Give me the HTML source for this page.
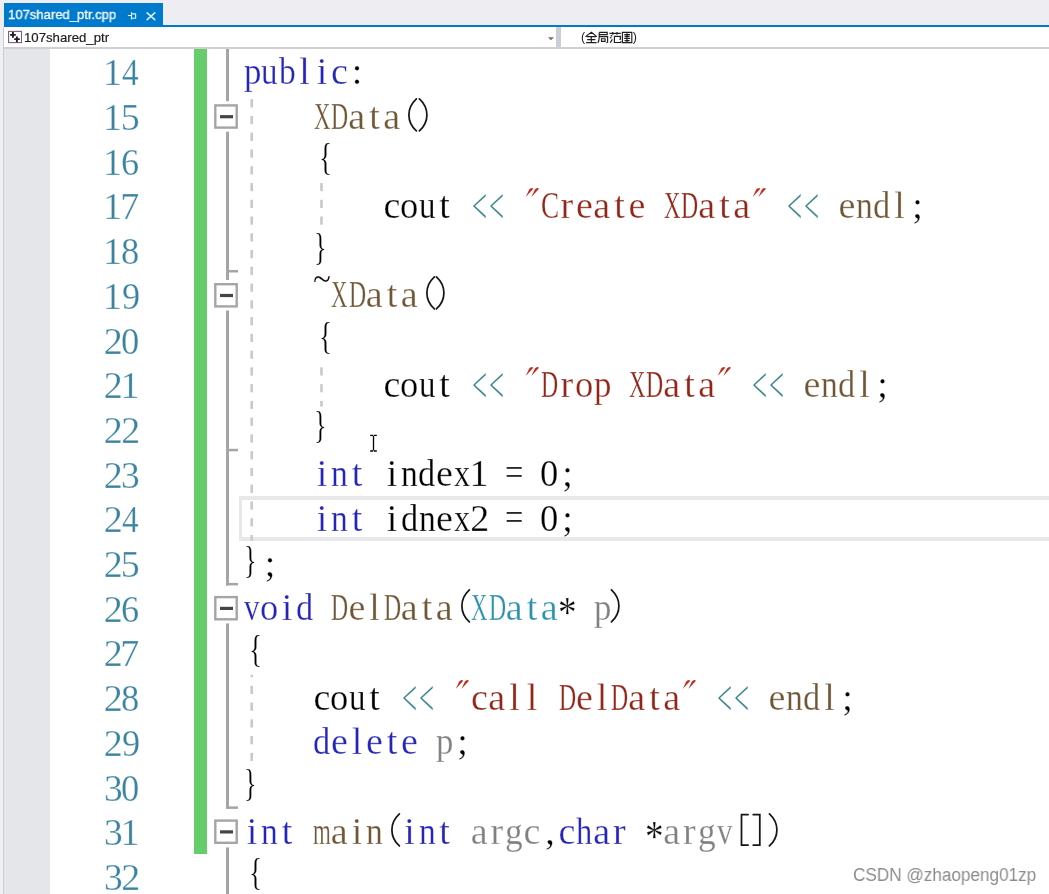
<!DOCTYPE html>
<html><head><meta charset="utf-8"><style>
*{margin:0;padding:0;box-sizing:border-box}
html,body{width:1049px;height:894px;overflow:hidden;background:#fff;position:relative}
body{font-family:"Liberation Sans",sans-serif}
#tabstrip{position:absolute;left:0;top:0;width:1049px;height:27px;background:#eeeef2}
#tab{position:absolute;left:4px;top:3px;width:158.5px;height:22px;background:#007acc;color:#fff;font-size:13.4px}
#tab .t{will-change:transform;position:absolute;left:4.3px;top:3.5px;letter-spacing:0;-webkit-text-stroke:0.35px #e8f6ff;transform:scaleX(0.975);transform-origin:0 0;white-space:pre}
#bluebar{position:absolute;left:4px;top:24.5px;width:1049px;height:2.3px;background:#007acc}
#nav{position:absolute;left:0;top:27px;width:1049px;height:21px;background:#fff}
#navtxt{position:absolute;left:24.2px;top:29.5px;font-size:13.2px;color:#1e1e1e;white-space:pre;will-change:transform;-webkit-text-stroke:0.2px #1e1e1e}
#navsep{position:absolute;left:556.3px;top:27px;width:4.5px;height:20.5px;background:#ccced6}
#scope{position:absolute;left:581.3px;top:30px;font-size:12.5px;color:#1e1e1e;white-space:pre;will-change:transform}
#navline{position:absolute;left:0;top:47.3px;width:1049px;height:1.8px;background:#cfcfd4}
#leftedge{position:absolute;left:0;top:27px;width:3.6px;height:867px;background:#f0f0f4}
#leftline{position:absolute;left:3.3px;top:27px;width:1.2px;height:867px;background:#caccd2}
#gutter{position:absolute;left:4.4px;top:49px;width:45.2px;height:845px;background:#e5e6e9}
#green{position:absolute;left:193.8px;top:49px;width:13.3px;height:804.6px;background:#67cd6b}
#curline{position:absolute;left:239.2px;top:496.4px;width:820px;height:45px;border:4px solid #e8e8eb;border-left-width:3.5px;border-right:none}
.ln{position:absolute;left:0;top:0;width:1049px;height:44.7px;will-change:transform;font-family:"Liberation Serif",serif;font-size:38px;line-height:44.7px;color:#000}
.ln s{position:absolute;top:0;text-decoration:none;-webkit-text-stroke:0.6px rgba(255,255,255,0.5);transform-origin:0 35.17px;white-space:pre}
.num s{color:#3a83a0}
#wm{will-change:transform;position:absolute;left:852.5px;top:865px;font-size:18px;transform:scaleX(0.953);transform-origin:0 0;white-space:pre;color:#8c8c8c;letter-spacing:0;text-shadow:0 0 1px #fff}
</style></head><body>
<div id="tabstrip"></div>
<div id="bluebar"></div>
<div id="tab"><span class="t">107shared_ptr.cpp</span>
</div>
<svg style="position:absolute;left:0;top:0" width="170" height="26" viewBox="0 0 170 26" fill="none" stroke="#d8f3ff">
<path d="M127.9 15.5H131.4M131.5 12.1V19.5M131.5 13.8H135.6V18.2H131.5" stroke-width="1.15"/>
<path d="M146.6 12.4L155.3 20.1M155.3 12.4L146.6 20.1" stroke-width="1.45"/>
</svg>
<div id="nav"></div>
<svg style="position:absolute;left:0;top:27px" width="30" height="21" viewBox="0 27 30 21">
<rect x="8.6" y="31.4" width="12.9" height="11.2" fill="#fff" stroke="#7d5d7d" stroke-width="1.1"/>
<path d="M10.1 34.9H15.8M12.9 31.9V37.8M14.2 39.1H19.8M16.9 36.4V42.3" stroke="#1e1e1e" stroke-width="1.9"/>
</svg>
<div id="navtxt">107shared_ptr</div>
<svg style="position:absolute;left:547px;top:36px" width="8" height="5"><path d="M1 1.2H7L4 4.3Z" fill="#717171"/></svg>
<div id="navsep"></div>
<div id="scope">(<span style="display:inline-block;width:47.5px"></span>)</div>
<svg style="position:absolute;left:580px;top:29px" width="60" height="18" viewBox="580 29 60 18" fill="none" stroke="#1e1e1e" stroke-width="1.15">
<path d="M585.5 36.6L591.4 32.2L596.8 36.6M586.6 36.6H596M587.2 39.6H595.4M586.1 42.6H596.6M591.3 36.6V42.6"/>
<path d="M599.2 32.4H607.2V34.6H599.4M599.2 32.4V37C599.2 40 598.8 41.5 597.8 43M599.6 36.6H607.6V42.2L606.4 42.8M601.5 38.7H605.1V41.3H601.5Z"/>
<path d="M609.4 33.4H620.8M612.7 32V34.8M617 32V34.8M610.8 35.2L612.2 36.2M610 37.3L611.4 38.2M610.2 42.6L612.4 39.4M614 36.4H620.4V39.2L619.4 39.4M614.4 36.4V42.5H620.8V41.2"/>
<path d="M622.4 32.4H631.8V42.6H622.4ZM624.3 34.6H630M624.6 36.4H629.6M624.2 38.4H630M627 33.2V42M624.6 40.6H629.6"/>
</svg>
<div id="navline"></div>
<div id="leftedge"></div><div id="leftline"></div>
<div id="gutter"></div>
<div id="green"></div>
<div id="curline"></div>
<svg style="position:absolute;left:0;top:0" width="1049" height="894"><rect x="215.3" y="105.4" width="21.4" height="22.2" fill="#fff" stroke="#a5a5a5" stroke-width="2.4"/><rect x="220" y="115.1" width="13" height="3.2" fill="#454545"/><rect x="215.3" y="284.2" width="21.4" height="22.2" fill="#fff" stroke="#a5a5a5" stroke-width="2.4"/><rect x="220" y="293.9" width="13" height="3.2" fill="#454545"/><rect x="215.3" y="597.1" width="21.4" height="22.2" fill="#fff" stroke="#a5a5a5" stroke-width="2.4"/><rect x="220" y="606.8" width="13" height="3.2" fill="#454545"/><rect x="215.3" y="820.6" width="21.4" height="22.2" fill="#fff" stroke="#a5a5a5" stroke-width="2.4"/><rect x="220" y="830.3" width="13" height="3.2" fill="#454545"/><rect x="226" y="49.0" width="3" height="52.2" fill="#a5a5a5"/><rect x="226" y="131.7" width="3" height="148.3" fill="#a5a5a5"/><rect x="226" y="270.0" width="12" height="2.5" fill="#a5a5a5"/><rect x="226" y="310.5" width="3" height="275.0" fill="#a5a5a5"/><rect x="226" y="448.8" width="12" height="2.5" fill="#a5a5a5"/><rect x="226" y="582.9" width="12" height="2.5" fill="#a5a5a5"/><rect x="226" y="623.4" width="3" height="185.5" fill="#a5a5a5"/><rect x="226" y="806.4" width="12" height="2.5" fill="#a5a5a5"/><rect x="226" y="847.4" width="3" height="46.6" fill="#a5a5a5"/><path d="M370.2 435.3H373.1M373.9 435.3H376.8M373.5 435.8V450.6M370.2 451H373.1M373.9 451H376.8" stroke="#000" stroke-width="1.3" fill="none"/><rect x="250.4" y="99.20" width="2.6" height="8.20" fill="#c9c9c9"/><rect x="250.4" y="115.96" width="2.6" height="8.20" fill="#c9c9c9"/><rect x="250.4" y="132.72" width="2.6" height="8.20" fill="#c9c9c9"/><rect x="250.4" y="149.48" width="2.6" height="8.20" fill="#c9c9c9"/><rect x="250.4" y="166.24" width="2.6" height="8.20" fill="#c9c9c9"/><rect x="250.4" y="183.00" width="2.6" height="8.20" fill="#c9c9c9"/><rect x="250.4" y="199.76" width="2.6" height="8.20" fill="#c9c9c9"/><rect x="250.4" y="216.52" width="2.6" height="8.20" fill="#c9c9c9"/><rect x="250.4" y="233.28" width="2.6" height="8.20" fill="#c9c9c9"/><rect x="250.4" y="250.04" width="2.6" height="8.20" fill="#c9c9c9"/><rect x="250.4" y="266.80" width="2.6" height="8.20" fill="#c9c9c9"/><rect x="250.4" y="283.56" width="2.6" height="8.20" fill="#c9c9c9"/><rect x="250.4" y="300.32" width="2.6" height="8.20" fill="#c9c9c9"/><rect x="250.4" y="317.08" width="2.6" height="8.20" fill="#c9c9c9"/><rect x="250.4" y="333.84" width="2.6" height="8.20" fill="#c9c9c9"/><rect x="250.4" y="350.60" width="2.6" height="8.20" fill="#c9c9c9"/><rect x="250.4" y="367.36" width="2.6" height="8.20" fill="#c9c9c9"/><rect x="250.4" y="384.12" width="2.6" height="8.20" fill="#c9c9c9"/><rect x="250.4" y="400.88" width="2.6" height="8.20" fill="#c9c9c9"/><rect x="250.4" y="417.64" width="2.6" height="8.20" fill="#c9c9c9"/><rect x="250.4" y="434.40" width="2.6" height="8.20" fill="#c9c9c9"/><rect x="250.4" y="451.16" width="2.6" height="8.20" fill="#c9c9c9"/><rect x="250.4" y="467.92" width="2.6" height="8.20" fill="#c9c9c9"/><rect x="250.4" y="484.68" width="2.6" height="8.20" fill="#c9c9c9"/><rect x="250.4" y="501.44" width="2.6" height="8.20" fill="#c9c9c9"/><rect x="250.4" y="518.20" width="2.6" height="8.20" fill="#c9c9c9"/><rect x="250.4" y="534.96" width="2.6" height="5.74" fill="#c9c9c9"/><rect x="320.2" y="183.10" width="2.6" height="8.10" fill="#c9c9c9"/><rect x="320.2" y="199.76" width="2.6" height="8.20" fill="#c9c9c9"/><rect x="320.2" y="216.52" width="2.6" height="8.20" fill="#c9c9c9"/><rect x="320.2" y="367.36" width="2.6" height="8.20" fill="#c9c9c9"/><rect x="320.2" y="384.12" width="2.6" height="8.20" fill="#c9c9c9"/><rect x="320.2" y="400.88" width="2.6" height="5.72" fill="#c9c9c9"/><rect x="250.4" y="674.80" width="2.6" height="2.44" fill="#c9c9c9"/><rect x="250.4" y="685.80" width="2.6" height="8.20" fill="#c9c9c9"/><rect x="250.4" y="702.56" width="2.6" height="8.20" fill="#c9c9c9"/><rect x="250.4" y="719.32" width="2.6" height="8.20" fill="#c9c9c9"/><rect x="250.4" y="736.08" width="2.6" height="8.20" fill="#c9c9c9"/><rect x="250.4" y="752.84" width="2.6" height="8.20" fill="#c9c9c9"/></svg>
<div class="ln num" style="top:50.33px"><s style="left:103.02px">1</s><s style="left:122.15px;transform:scale(0.877,1.000)">4</s></div>
<div class="ln num" style="top:95.03px"><s style="left:103.02px">1</s><s style="left:120.69px">5</s></div>
<div class="ln num" style="top:139.73px"><s style="left:103.02px">1</s><s style="left:121.24px;transform:scale(0.955,1.000)">6</s></div>
<div class="ln num" style="top:184.43px"><s style="left:103.02px">1</s><s style="left:120.34px">7</s></div>
<div class="ln num" style="top:229.13px"><s style="left:103.02px">1</s><s style="left:121.41px;transform:scale(0.962,1.000)">8</s></div>
<div class="ln num" style="top:273.83px"><s style="left:103.02px">1</s><s style="left:121.63px;transform:scale(0.956,1.000)">9</s></div>
<div class="ln num" style="top:318.53px"><s style="left:103.76px">2</s><s style="left:121.41px;transform:scale(0.962,1.000)">0</s></div>
<div class="ln num" style="top:363.23px"><s style="left:103.76px">2</s><s style="left:120.52px">1</s></div>
<div class="ln num" style="top:407.93px"><s style="left:103.76px">2</s><s style="left:121.26px">2</s></div>
<div class="ln num" style="top:452.63px"><s style="left:103.76px">2</s><s style="left:121.00px;transform:scale(0.987,1.000)">3</s></div>
<div class="ln num" style="top:497.33px"><s style="left:103.76px">2</s><s style="left:122.15px;transform:scale(0.877,1.000)">4</s></div>
<div class="ln num" style="top:542.03px"><s style="left:103.76px">2</s><s style="left:120.69px">5</s></div>
<div class="ln num" style="top:586.73px"><s style="left:103.76px">2</s><s style="left:121.24px;transform:scale(0.955,1.000)">6</s></div>
<div class="ln num" style="top:631.43px"><s style="left:103.76px">2</s><s style="left:120.34px">7</s></div>
<div class="ln num" style="top:676.13px"><s style="left:103.76px">2</s><s style="left:121.41px;transform:scale(0.962,1.000)">8</s></div>
<div class="ln num" style="top:720.83px"><s style="left:103.76px">2</s><s style="left:121.63px;transform:scale(0.956,1.000)">9</s></div>
<div class="ln num" style="top:765.53px"><s style="left:103.50px;transform:scale(0.987,1.000)">3</s><s style="left:121.41px;transform:scale(0.962,1.000)">0</s></div>
<div class="ln num" style="top:810.23px"><s style="left:103.50px;transform:scale(0.987,1.000)">3</s><s style="left:120.52px">1</s></div>
<div class="ln num" style="top:854.93px"><s style="left:103.50px;transform:scale(0.987,1.000)">3</s><s style="left:121.26px">2</s></div>
<div class="ln" style="top:48.83px"><s style="left:243.74px;transform:scale(0.917,1.000);color:#2424b8">p</s><s style="left:261.36px;transform:scale(0.868,1.000);color:#2424b8">u</s><s style="left:279.30px;transform:scale(0.883,1.000);color:#2424b8">b</s><s style="left:299.27px;color:#2424b8">l</s><s style="left:316.73px;color:#2424b8">i</s><s style="left:330.98px;color:#2424b8">c</s><s style="left:351.81px">:</s></div>
<div class="ln" style="top:93.53px"><s style="left:313.80px;transform:scale(0.598,1.000);color:#6f5634">X</s><s style="left:331.12px;transform:scale(0.624,1.000);color:#6f5634">D</s><s style="left:348.21px;color:#6f5634">a</s><s style="left:369.20px;color:#6f5634">t</s><s style="left:383.21px;color:#6f5634">a</s><svg style="position:absolute;left:400.00px;top:0.17px" width="18" height="44" fill="none" stroke="#161616" stroke-width="1.75" stroke-linecap="round"><path d="M16.4 4.9C10.6 10.2 8.9 15.2 8.9 20.9C8.9 26.6 10.6 31.6 16.4 36.9"/></svg><svg style="position:absolute;left:417.50px;top:0.17px" width="18" height="44" fill="none" stroke="#161616" stroke-width="1.75" stroke-linecap="round"><path d="M1.4 4.9C7.2 10.2 8.9 15.2 8.9 20.9C8.9 26.6 7.2 31.6 1.4 36.9"/></svg></div>
<div class="ln" style="top:138.23px"><s style="left:318.75px;transform:translateY(-2.6px) scale(0.723,1.000)">{</s></div>
<div class="ln" style="top:182.93px"><s style="left:383.48px">c</s><s style="left:400.41px;transform:scale(0.962,1.000)">o</s><s style="left:418.86px;transform:scale(0.868,1.000)">u</s><s style="left:439.20px">t</s><s style="left:471.96px;transform:translateY(4.6px) scale(0.707,1.340);color:#2a7d7f">&lt;</s><s style="left:489.46px;transform:translateY(4.6px) scale(0.707,1.340);color:#2a7d7f">&lt;</s><svg style="position:absolute;left:522.50px;top:0" width="18" height="18" fill="#c42c1f"><path d="M6.2 6.6Q8.1 4.1 10.3 5.7L2.7 14ZM11.9 6.6Q13.8 4.1 16 5.7L8.4 14Z"/></svg><s style="left:540.69px;transform:scale(0.715,1.000);color:#922418">C</s><s style="left:560.51px;color:#922418">r</s><s style="left:576.03px;color:#922418">e</s><s style="left:593.21px;color:#922418">a</s><s style="left:614.20px;color:#922418">t</s><s style="left:628.53px;color:#922418">e</s><s style="left:663.80px;transform:scale(0.598,1.000);color:#922418">X</s><s style="left:681.12px;transform:scale(0.624,1.000);color:#922418">D</s><s style="left:698.21px;color:#922418">a</s><s style="left:719.20px;color:#922418">t</s><s style="left:733.21px;color:#922418">a</s><svg style="position:absolute;left:750.00px;top:0" width="18" height="18" fill="#c42c1f"><path d="M6.2 6.6Q8.1 4.1 10.3 5.7L2.7 14ZM11.9 6.6Q13.8 4.1 16 5.7L8.4 14Z"/></svg><s style="left:786.96px;transform:translateY(4.6px) scale(0.707,1.340);color:#2a7d7f">&lt;</s><s style="left:804.46px;transform:translateY(4.6px) scale(0.707,1.340);color:#2a7d7f">&lt;</s><s style="left:838.53px;color:#6f5634">e</s><s style="left:856.03px;transform:scale(0.883,1.000);color:#6f5634">n</s><s style="left:873.06px;transform:scale(0.903,1.000);color:#6f5634">d</s><s style="left:894.27px;color:#6f5634">l</s><s style="left:912.24px">;</s></div>
<div class="ln" style="top:227.63px"><s style="left:314.48px;transform:translateY(-2.6px) scale(0.688,1.000)">}</s></div>
<div class="ln" style="top:272.33px"><s style="left:313.13px;transform:translateY(-16.0px) scale(0.869,1.000)">~</s><s style="left:331.30px;transform:scale(0.598,1.000);color:#6f5634">X</s><s style="left:348.62px;transform:scale(0.624,1.000);color:#6f5634">D</s><s style="left:365.71px;color:#6f5634">a</s><s style="left:386.70px;color:#6f5634">t</s><s style="left:400.71px;color:#6f5634">a</s><svg style="position:absolute;left:417.50px;top:0.17px" width="18" height="44" fill="none" stroke="#161616" stroke-width="1.75" stroke-linecap="round"><path d="M16.4 4.9C10.6 10.2 8.9 15.2 8.9 20.9C8.9 26.6 10.6 31.6 16.4 36.9"/></svg><svg style="position:absolute;left:435.00px;top:0.17px" width="18" height="44" fill="none" stroke="#161616" stroke-width="1.75" stroke-linecap="round"><path d="M1.4 4.9C7.2 10.2 8.9 15.2 8.9 20.9C8.9 26.6 7.2 31.6 1.4 36.9"/></svg></div>
<div class="ln" style="top:317.03px"><s style="left:318.75px;transform:translateY(-2.6px) scale(0.723,1.000)">{</s></div>
<div class="ln" style="top:361.73px"><s style="left:383.48px">c</s><s style="left:400.41px;transform:scale(0.962,1.000)">o</s><s style="left:418.86px;transform:scale(0.868,1.000)">u</s><s style="left:439.20px">t</s><s style="left:471.96px;transform:translateY(4.6px) scale(0.707,1.340);color:#2a7d7f">&lt;</s><s style="left:489.46px;transform:translateY(4.6px) scale(0.707,1.340);color:#2a7d7f">&lt;</s><svg style="position:absolute;left:522.50px;top:0" width="18" height="18" fill="#c42c1f"><path d="M6.2 6.6Q8.1 4.1 10.3 5.7L2.7 14ZM11.9 6.6Q13.8 4.1 16 5.7L8.4 14Z"/></svg><s style="left:541.12px;transform:scale(0.624,1.000);color:#922418">D</s><s style="left:560.51px;color:#922418">r</s><s style="left:575.41px;transform:scale(0.962,1.000);color:#922418">o</s><s style="left:593.74px;transform:scale(0.917,1.000);color:#922418">p</s><s style="left:628.80px;transform:scale(0.598,1.000);color:#922418">X</s><s style="left:646.12px;transform:scale(0.624,1.000);color:#922418">D</s><s style="left:663.21px;color:#922418">a</s><s style="left:684.20px;color:#922418">t</s><s style="left:698.21px;color:#922418">a</s><svg style="position:absolute;left:715.00px;top:0" width="18" height="18" fill="#c42c1f"><path d="M6.2 6.6Q8.1 4.1 10.3 5.7L2.7 14ZM11.9 6.6Q13.8 4.1 16 5.7L8.4 14Z"/></svg><s style="left:751.96px;transform:translateY(4.6px) scale(0.707,1.340);color:#2a7d7f">&lt;</s><s style="left:769.46px;transform:translateY(4.6px) scale(0.707,1.340);color:#2a7d7f">&lt;</s><s style="left:803.53px;color:#6f5634">e</s><s style="left:821.03px;transform:scale(0.883,1.000);color:#6f5634">n</s><s style="left:838.06px;transform:scale(0.903,1.000);color:#6f5634">d</s><s style="left:859.27px;color:#6f5634">l</s><s style="left:877.24px">;</s></div>
<div class="ln" style="top:406.43px"><s style="left:314.48px;transform:translateY(-2.6px) scale(0.688,1.000)">}</s></div>
<div class="ln" style="top:451.13px"><s style="left:316.73px;color:#2424b8">i</s><s style="left:331.03px;transform:scale(0.883,1.000);color:#2424b8">n</s><s style="left:351.70px;color:#2424b8">t</s><s style="left:386.73px">i</s><s style="left:401.03px;transform:scale(0.883,1.000)">n</s><s style="left:418.06px;transform:scale(0.903,1.000)">d</s><s style="left:436.03px">e</s><s style="left:454.02px;transform:scale(0.852,1.000)">x</s><s style="left:469.52px">1</s><s style="left:505.32px;transform:translateY(-0.8px) scale(0.860,1.000)">=</s><s style="left:540.41px;transform:scale(0.962,1.000)">0</s><s style="left:562.24px">;</s></div>
<div class="ln" style="top:495.83px"><s style="left:316.73px;color:#2424b8">i</s><s style="left:331.03px;transform:scale(0.883,1.000);color:#2424b8">n</s><s style="left:351.70px;color:#2424b8">t</s><s style="left:386.73px">i</s><s style="left:400.56px;transform:scale(0.903,1.000)">d</s><s style="left:418.53px;transform:scale(0.883,1.000)">n</s><s style="left:436.03px">e</s><s style="left:454.02px;transform:scale(0.852,1.000)">x</s><s style="left:470.26px">2</s><s style="left:505.32px;transform:translateY(-0.8px) scale(0.860,1.000)">=</s><s style="left:540.41px;transform:scale(0.962,1.000)">0</s><s style="left:562.24px">;</s></div>
<div class="ln" style="top:540.53px"><s style="left:244.48px;transform:translateY(-2.6px) scale(0.688,1.000)">}</s><s style="left:264.74px">;</s></div>
<div class="ln" style="top:585.23px"><s style="left:244.30px;transform:scale(0.816,1.000);color:#2424b8">v</s><s style="left:260.41px;transform:scale(0.962,1.000);color:#2424b8">o</s><s style="left:281.73px;color:#2424b8">i</s><s style="left:295.56px;transform:scale(0.903,1.000);color:#2424b8">d</s><s style="left:331.12px;transform:scale(0.624,1.000);color:#6f5634">D</s><s style="left:348.53px;color:#6f5634">e</s><s style="left:369.27px;color:#6f5634">l</s><s style="left:383.62px;transform:scale(0.624,1.000);color:#6f5634">D</s><s style="left:400.71px;color:#6f5634">a</s><s style="left:421.70px;color:#6f5634">t</s><s style="left:435.71px;color:#6f5634">a</s><svg style="position:absolute;left:452.50px;top:0.17px" width="18" height="44" fill="none" stroke="#161616" stroke-width="1.75" stroke-linecap="round"><path d="M16.4 4.9C10.6 10.2 8.9 15.2 8.9 20.9C8.9 26.6 10.6 31.6 16.4 36.9"/></svg><s style="left:471.30px;transform:scale(0.598,1.000);color:#2b91af">X</s><s style="left:488.62px;transform:scale(0.624,1.000);color:#2b91af">D</s><s style="left:505.71px;color:#2b91af">a</s><s style="left:526.70px;color:#2b91af">t</s><s style="left:540.71px;color:#2b91af">a</s><s style="left:557.73px;transform:translateY(7.0px) scale(0.979,1.165)">*</s><s style="left:593.74px;transform:scale(0.917,1.000);color:#808080">p</s><svg style="position:absolute;left:610.00px;top:0.17px" width="18" height="44" fill="none" stroke="#161616" stroke-width="1.75" stroke-linecap="round"><path d="M1.4 4.9C7.2 10.2 8.9 15.2 8.9 20.9C8.9 26.6 7.2 31.6 1.4 36.9"/></svg></div>
<div class="ln" style="top:629.93px"><s style="left:248.75px;transform:translateY(-2.6px) scale(0.723,1.000)">{</s></div>
<div class="ln" style="top:674.63px"><s style="left:313.48px">c</s><s style="left:330.41px;transform:scale(0.962,1.000)">o</s><s style="left:348.86px;transform:scale(0.868,1.000)">u</s><s style="left:369.20px">t</s><s style="left:401.96px;transform:translateY(4.6px) scale(0.707,1.340);color:#2a7d7f">&lt;</s><s style="left:419.46px;transform:translateY(4.6px) scale(0.707,1.340);color:#2a7d7f">&lt;</s><svg style="position:absolute;left:452.50px;top:0" width="18" height="18" fill="#c42c1f"><path d="M6.2 6.6Q8.1 4.1 10.3 5.7L2.7 14ZM11.9 6.6Q13.8 4.1 16 5.7L8.4 14Z"/></svg><s style="left:470.98px;color:#922418">c</s><s style="left:488.21px;color:#922418">a</s><s style="left:509.27px;color:#922418">l</s><s style="left:526.77px;color:#922418">l</s><s style="left:558.62px;transform:scale(0.624,1.000);color:#922418">D</s><s style="left:576.03px;color:#922418">e</s><s style="left:596.77px;color:#922418">l</s><s style="left:611.12px;transform:scale(0.624,1.000);color:#922418">D</s><s style="left:628.21px;color:#922418">a</s><s style="left:649.20px;color:#922418">t</s><s style="left:663.21px;color:#922418">a</s><svg style="position:absolute;left:680.00px;top:0" width="18" height="18" fill="#c42c1f"><path d="M6.2 6.6Q8.1 4.1 10.3 5.7L2.7 14ZM11.9 6.6Q13.8 4.1 16 5.7L8.4 14Z"/></svg><s style="left:716.96px;transform:translateY(4.6px) scale(0.707,1.340);color:#2a7d7f">&lt;</s><s style="left:734.46px;transform:translateY(4.6px) scale(0.707,1.340);color:#2a7d7f">&lt;</s><s style="left:768.53px;color:#6f5634">e</s><s style="left:786.03px;transform:scale(0.883,1.000);color:#6f5634">n</s><s style="left:803.06px;transform:scale(0.903,1.000);color:#6f5634">d</s><s style="left:824.27px;color:#6f5634">l</s><s style="left:842.24px">;</s></div>
<div class="ln" style="top:719.33px"><s style="left:313.06px;transform:scale(0.903,1.000);color:#2424b8">d</s><s style="left:331.03px;color:#2424b8">e</s><s style="left:351.77px;color:#2424b8">l</s><s style="left:366.03px;color:#2424b8">e</s><s style="left:386.70px;color:#2424b8">t</s><s style="left:401.03px;color:#2424b8">e</s><s style="left:436.24px;transform:scale(0.917,1.000);color:#808080">p</s><s style="left:457.24px">;</s></div>
<div class="ln" style="top:764.03px"><s style="left:244.48px;transform:translateY(-2.6px) scale(0.688,1.000)">}</s></div>
<div class="ln" style="top:808.73px"><s style="left:246.73px;color:#2424b8">i</s><s style="left:261.03px;transform:scale(0.883,1.000);color:#2424b8">n</s><s style="left:281.70px;color:#2424b8">t</s><s style="left:313.07px;transform:scale(0.604,1.000);color:#6f5634">m</s><s style="left:330.71px;color:#6f5634">a</s><s style="left:351.73px;color:#6f5634">i</s><s style="left:366.03px;transform:scale(0.883,1.000);color:#6f5634">n</s><svg style="position:absolute;left:382.50px;top:0.17px" width="18" height="44" fill="none" stroke="#161616" stroke-width="1.75" stroke-linecap="round"><path d="M16.4 4.9C10.6 10.2 8.9 15.2 8.9 20.9C8.9 26.6 10.6 31.6 16.4 36.9"/></svg><s style="left:404.23px;color:#2424b8">i</s><s style="left:418.53px;transform:scale(0.883,1.000);color:#2424b8">n</s><s style="left:439.20px;color:#2424b8">t</s><s style="left:470.71px;color:#808080">a</s><s style="left:490.51px;color:#808080">r</s><s style="left:505.28px;transform:scale(0.931,1.000);color:#808080">g</s><s style="left:523.48px;color:#808080">c</s><s style="left:545.27px">,</s><s style="left:558.48px;color:#2424b8">c</s><s style="left:576.48px;transform:scale(0.855,1.000);color:#2424b8">h</s><s style="left:593.21px;color:#2424b8">a</s><s style="left:613.01px;color:#2424b8">r</s><s style="left:645.23px;transform:translateY(7.0px) scale(0.979,1.165)">*</s><s style="left:663.21px;color:#808080">a</s><s style="left:683.01px;color:#808080">r</s><s style="left:697.78px;transform:scale(0.931,1.000);color:#808080">g</s><s style="left:716.80px;transform:scale(0.816,1.000);color:#808080">v</s><svg style="position:absolute;left:732.50px;top:0.17px" width="18" height="44" fill="none" stroke="#161616" stroke-width="1.75" stroke-linecap="round"><path d="M15.1 5.6H8.5V36.1H15.1"/></svg><svg style="position:absolute;left:750.00px;top:0.17px" width="18" height="44" fill="none" stroke="#161616" stroke-width="1.75" stroke-linecap="round"><path d="M3.2 5.6H9.8V36.1H3.2"/></svg><svg style="position:absolute;left:767.50px;top:0.17px" width="18" height="44" fill="none" stroke="#161616" stroke-width="1.75" stroke-linecap="round"><path d="M1.4 4.9C7.2 10.2 8.9 15.2 8.9 20.9C8.9 26.6 7.2 31.6 1.4 36.9"/></svg></div>
<div class="ln" style="top:853.43px"><s style="left:248.75px;transform:translateY(-2.6px) scale(0.723,1.000)">{</s></div>
<div id="wm">CSDN @zhaopeng01zp</div>
</body></html>
